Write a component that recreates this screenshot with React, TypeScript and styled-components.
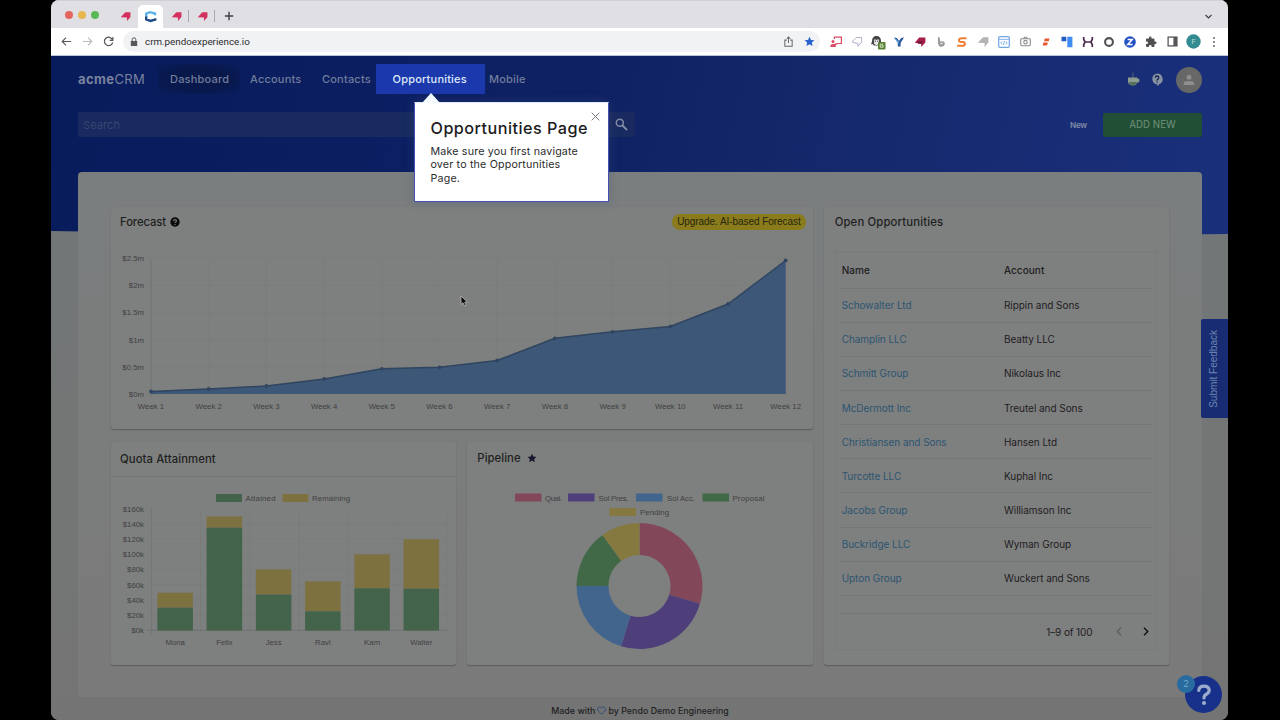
import React from "react";
import styled, { createGlobalStyle } from "styled-components";

const Global = createGlobalStyle`
  *{box-sizing:border-box}
  body{margin:0;background:#000;font-family:Inter,"Liberation Sans",sans-serif;overflow:hidden}
  svg{display:block;flex:none}
`;

const Desktop = styled.div`height:720px;width:1280px;background:#000;padding:0 52px 0 51px;`;
const BrowserWindow = styled.div`
  position:relative;height:720px;border-radius:8px;overflow:hidden;display:flex;flex-direction:column;background:#757676;
`;
const TabStrip = styled.div`
  height:28px;flex:none;background:#e0dfe4;display:flex;align-items:stretch;border-top:1px solid #d0cfd4;
`;
const Lights = styled.div`display:flex;align-items:center;gap:5px;padding-left:14px;width:61px;`;
const Light = styled.i<{ $c: string }>`width:8px;height:8px;border-radius:50%;background:${p => p.$c};`;
const Tab = styled.div<{ $active?: boolean; $w: number; $line?: boolean }>`
  width:${p => p.$w}px;display:flex;align-items:center;justify-content:center;padding-top:3px;
  ${p => p.$active && "background:#fff;margin-top:4px;padding-top:0;border-radius:5px 5px 0 0;"}
  ${p => p.$line && "background:linear-gradient(#aaa9ae,#aaa9ae) right 9px/1px 12px no-repeat;"}
`;
const Spacer = styled.div`flex:1;`;
const Toolbar = styled.div`
  height:28px;flex:none;background:#fff;border-bottom:1px solid #b9c5d8;display:flex;align-items:center;padding:0 3.5px 0 4.5px;
`;
const Cell = styled.div`width:21px;height:21px;display:flex;align-items:center;justify-content:center;`;
const Address = styled.div`
  margin:0 5.5px 0 4.5px;flex:1;height:21px;border-radius:11px;background:#f1f2f4;display:flex;align-items:center;
`;
const Url = styled.span`font:9.8px Roboto,sans-serif;color:#2b2c2e;margin-left:1px;`;

const Page = styled.div`
  position:relative;flex:1;min-height:0;overflow:hidden;padding:0 26px 0 27px;
  background:linear-gradient(180deg,#717677,#747676 60%,#747474);
  isolation:isolate;
  &::before{content:"";position:absolute;z-index:-1;left:0;right:0;top:0;height:184px;
    background:linear-gradient(103deg,#081b5b 0%,#0b1f62 30%,#0e2263 45%,#14286b 65%,#1a307c 100%);
    clip-path:polygon(0 0,100% 0,100% 178px,50% 184px,0 175px);}
`;
const Nav = styled.nav`display:flex;padding-top:8px;height:38px;`;
const Logo = styled.div`
  width:80px;line-height:30px;font-size:13px;color:#79839f;letter-spacing:.4px;white-space:nowrap;b{font-weight:700}
`;
const NavItem = styled.a<{ $w: number; $pad: number; $state?: "current" | "target" }>`
  width:${p => p.$w}px;padding-left:${p => p.$pad}px;height:30px;line-height:30px;font-size:11px;font-weight:500;
  letter-spacing:.2px;white-space:nowrap;color:#707c9b;
  ${p => p.$state === "current" && "background:radial-gradient(ellipse,#08184b 50%,transparent 100%);"}
  ${p => p.$state === "target" && "background:#1b39ac;color:#dfe9fb;"}
`;
const NavTools = styled.div`margin-left:auto;display:flex;align-items:center;gap:11px;height:31px;`;
const Avatar = styled.div`
  margin-left:2px;width:26px;height:26px;border-radius:50%;background:#666766;display:flex;align-items:center;justify-content:center;
`;
const Actions = styled.div`display:flex;align-items:center;margin-top:18px;height:25px;`;
const Search = styled.div`
  width:557px;height:25px;background:#182a5f;border-radius:2px;display:flex;align-items:center;justify-content:space-between;
  padding:0 7px 0 5px;font-size:11px;letter-spacing:.1px;color:#37466f;
`;
const NewLabel = styled.span`margin-left:auto;font-size:8.2px;font-weight:600;color:#7f8aa7;letter-spacing:-.25px;`;
const AddButton = styled.button`
  margin-left:16px;width:99px;height:24px;border:0;border-radius:2px;background:#214f35;color:#668770;
  font:500 9.7px Inter,sans-serif;letter-spacing:.05px;
`;
const Panel = styled.main`
  margin-top:35px;height:525px;border-radius:4px;background:linear-gradient(180deg,#7a7e7e,#7b7c7c 50%,#7a7a7a);
  padding:35px 33px 32px;display:grid;grid-template-columns:repeat(3,1fr);grid-template-rows:222px 223px;gap:13px 11px;
`;
const Card = styled.section<{ $area: string }>`
  grid-area:${p => p.$area};background:#7e7f7f;border-radius:3px;min-width:0;display:flex;flex-direction:column;
  box-shadow:0 1px 1px -.5px #5c5d5d,0 0 2px #797a7a;
`;
const CardHead = styled.header<{ $h?: number; $rule?: boolean; $left?: number; $top?: number }>`
  height:${p => p.$h ?? 31}px;flex:none;display:flex;align-items:center;padding:${p => p.$top ?? 0}px 7px 0 ${p => p.$left ?? 9}px;
  border-bottom:1px solid ${p => (p.$rule ? "#737474" : "transparent")};
`;
const CardTitle = styled.h2<{ $ls?: number }>`
  margin:0;font-size:11.3px;font-weight:500;color:#1e1f20;letter-spacing:${p => p.$ls ?? 0.15}px;
`;
const Upgrade = styled.span`
  margin-left:auto;background:#8a7c1c;color:#28250e;border-radius:8px;padding:0 5px;
  font:10px/16px "Liberation Sans",sans-serif;letter-spacing:-.06px;white-space:nowrap;
`;
const TitleIcon = styled.span<{ $gap: number }>`margin-left:${p => p.$gap}px;`;
const Chart = styled.svg`
  text{font-family:"Liberation Sans",sans-serif;font-size:7.8px;fill:#3f4142}
`;
const Table = styled.div`margin:13px 12px 0 11px;border:1px solid #797a7a;height:399px;display:flex;flex-direction:column;`;
const Row = styled.div<{ $head?: boolean }>`
  height:${p => (p.$head ? 36.5 : 34.17)}px;flex:none;display:grid;grid-template-columns:162.3px 1fr;align-items:center;
  margin:0 4px;padding-left:2px;border-bottom:1px solid #757676;
  font-size:10px;font-weight:${p => (p.$head ? 500 : 400)};color:#1f2021;letter-spacing:${p => (p.$head ? 0.05 : -0.05)}px;
`;
const Link = styled.a`color:#2c5672;`;
const Pager = styled.div`
  margin:17.5px 4px 0;height:37px;border-top:1px solid #757676;display:flex;align-items:center;justify-content:flex-end;
  font-size:10px;letter-spacing:-.1px;color:#202122;padding-right:2.5px;
`;
const PagerButton = styled.span<{ $ml: number }>`margin-left:${p => p.$ml}px;`;
const Footer = styled.footer`
  display:flex;justify-content:center;align-items:center;gap:2px;height:26px;font-size:8.8px;font-weight:500;
  letter-spacing:.05px;color:#202122;
`;
const Guide = styled.div`
  position:absolute;left:363px;top:102px;width:195px;height:100px;background:#fff;border:1px solid #4450b5;border-top-color:#dfe6f6;
  box-shadow:0 0 10px rgba(70,80,130,.35);padding:16px 0 0 15.5px;
  &::before{content:"";position:absolute;left:7px;top:-10px;border:9.5px solid transparent;border-top:0;border-bottom:10px solid #f4fbff}
`;
const GuideTitle = styled.h3`margin:0;font-size:16.2px;line-height:18px;font-weight:500;color:#1c1c1d;letter-spacing:.47px;white-space:nowrap;`;
const GuideText = styled.p`margin:7.5px 0 0;font-size:10.7px;line-height:13.7px;color:#2b2b2c;letter-spacing:.17px;white-space:nowrap;`;
const Close = styled.svg`position:absolute;right:8px;top:9px;`;
const Feedback = styled.div`
  position:absolute;right:0;top:319px;width:27px;height:99px;background:#172c72;border-radius:2px 0 0 2px;
  display:flex;align-items:center;justify-content:center;padding-right:2px;color:#6f87b0;
  font:10px "Liberation Sans",sans-serif;writing-mode:vertical-rl;
  span{transform:rotate(180deg)}
`;
const HelpButton = styled.div`
  position:absolute;left:1134px;top:676px;width:37px;height:37px;border-radius:50%;background:#17308a;
  display:flex;align-items:center;justify-content:center;
`;
const Badge = styled.span`
  position:absolute;left:-8px;top:-1px;width:18px;height:18px;border-radius:50%;background:#286b9e;color:#74a9cf;
  font-size:9px;line-height:18px;text-align:center;
`;
const Pointer = styled.svg`position:absolute;left:409px;top:295px;`;

const Pendo = ({ c = "#d5315f", s = 11 }: { c?: string; s?: number }) => (
  <svg width={s} height={s} viewBox="0 0 12 12"><path fill={c} d="M.8 6.800 5.500 1.700q.4-.4 1-.4h4.900V6.500L7.600 11V7z" /></svg>
);
const I = ({ children, s = 12 }: { children: React.ReactNode; s?: number }) => (
  <svg width={s} height={s} viewBox="0 0 12 12" fill="none" strokeWidth="1.2">{children}</svg>
);

const extensions: React.ReactNode[] = [
  <I><path stroke="#d94a66" d="M4.4 3V1.2h7v6.3H7" /><circle cx="3" cy="5.4" r="1.5" fill="#d94a66" /><path fill="#d94a66" d="M.4 11V9.6Q.4 8 3 8l4-.8.4 1L5.7 9.3V11z" /></I>,
  <I><path stroke="#aaa6c6" strokeWidth=".9" d="M1.200 5.900 5.200 1.500h5.500V6L7 10.300V7.300L4 7z" /></I>,
  <svg width="16" height="16" viewBox="0 0 16 16"><path fill="#444" d="M2 7.500Q2 2 6.500 2t4.500 5.500l1.500 3-2-.5-1 1.500H4L2.500 10 1 10.500z" /><path d="M4 6.500Q4.300 4.500 6.500 6q2.200-1.500 2.500.5v3Q8 11 6.500 11T4 9.500z" fill="#e8e8e8" /><circle cx="5.400" cy="7.200" r=".6" fill="#333" /><circle cx="7.700" cy="7.200" r=".6" fill="#333" /><rect x="8" y="8" width="7.500" height="7.500" rx="1" fill="#577f32" /><path d="M13.200 10.200h-3v3h3v-1.500h-1.500" stroke="#d5e4c5" fill="none" /></svg>,
  <I><path fill="#2b5c9b" d="M1 1.500 3.800 2 6 4.800 8.200 2l2.800-.5L7.600 7v3.500H4.800V7z" /><path fill="#73b6df" d="m1 1.500 5 4.300-.8 1.700z" /></I>,
  <I><path fill="#a51e46" d="M.8 6.800 5.200 1.500h6.200v5L7.200 11V8z" /><path fill="#5e1730" d="M4 5.500h4v2H4z" /></I>,
  <I><path fill="#9a9a9a" d="M3 .8l1.600.8.8 4.200L8 5l2 2-1 3-4 1-2-3z" /><path stroke="#fff" strokeWidth=".8" d="m5 8 3-1" /></I>,
  <I><path stroke="#ee7f32" strokeWidth="2" d="M10.500 2.200H5.700Q3.200 2.200 3 4.100T5.200 6H7q2.100 0 1.800 2T6.200 9.800h-5" /></I>,
  <Pendo c="#b4b4b4" s={12} />,
  <I><rect x=".7" y=".7" width="10.6" height="10.6" rx="1" stroke="#72a8e2" /><path stroke="#72a8e2" d="M1 3.3h10M4.2 5.4 2.8 7l1.4 1.6M7.8 5.4 9.2 7 7.8 8.6M6.5 5.2l-1 3.7" strokeWidth=".9" /></I>,
  <I s={11}><rect x=".8" y="3" width="10.4" height="7.6" rx="1" stroke="#8a8a8a" /><path d="M4 2.8 5 1.4h2l1 1.4" stroke="#8a8a8a" /><circle cx="6" cy="6.7" r="1.900" stroke="#8a8a8a" /></I>,
  <I><path fill="#e9582d" d="M5 2.500h4.500L8.700 5.300H4.200q0-2.800.8-2.800M3.400 6.600h4.400Q7.500 9.500 6.600 9.500H2.700z" /></I>,
  <I><path fill="#235bc4" d="M.5.8h4.800v4.5H.5z" /><path fill="#3f8cf2" d="M6.3.8h5.1v10.5H6.3z" /></I>,
  <I><path stroke="#4b2c49" strokeWidth="1.700" d="M1.700 1v2.500L3.200 6 1.700 8.500V11M10.300 1v2.500L8.800 6l1.500 2.500V11M3 6h6" /></I>,
  <I><circle cx="6" cy="6" r="3.900" stroke="#505153" strokeWidth="2.100" /></I>,
  <I><circle cx="6" cy="6" r="5.800" fill="#2351c6" /><path stroke="#fff" strokeWidth="1.500" d="M3.600 3.500h4.600L3.800 8.500h4.700" /></I>,
  <svg width="12" height="12" viewBox="0 0 24 24" fill="#4f5052"><path d="M20.5 11H19V7a2 2 0 0 0-2-2h-4V3.500a2.500 2.500 0 0 0-5 0V5H4a2 2 0 0 0-2 2v3.800h1.500a2.700 2.700 0 0 1 0 5.400H2V20a2 2 0 0 0 2 2h3.800v-1.500a2.700 2.700 0 0 1 5.400 0V22H17a2 2 0 0 0 2-2v-4h1.500a2.500 2.500 0 0 0 0-5" /></svg>,
  <I s={11}><rect x="1.200" y="1.200" width="9.600" height="9.600" stroke="#555659" strokeWidth="1.400" /><path fill="#555659" d="M7 1h4v10H7z" /></I>,
  <svg width="15" height="15" viewBox="0 0 15 15"><circle cx="7.500" cy="7.500" r="7.200" fill="#338b92" /><text x="7.500" y="10.300" fontSize="7.500" fill="#b9dddd" textAnchor="middle" fontFamily="Roboto">F</text></svg>,
  <I><circle cx="6" cy="2" r=".9" fill="#55585c" /><circle cx="6" cy="6" r=".9" fill="#55585c" /><circle cx="6" cy="10" r=".9" fill="#55585c" /></I>,
];

const Star = ({ c, s }: { c: string; s: number }) => (
  <svg width={s} height={s} viewBox="0 0 24 24"><path fill={c} d="m12 1.500 3.200 7 7.600.8-5.700 5.100 1.600 7.500L12 18.100l-6.700 3.800 1.600-7.500L1.200 9.300l7.600-.8z" /></svg>
);

/* Forecast chart, in card coordinates (origin 111,238) */
const weekY = [391.5, 389, 386, 379, 368.8, 367.3, 360.5, 338.3, 331.8, 326.5, 304, 260.5].map(v => v - 238);
const weekX = weekY.map((_, i) => 40 + i * 57.7);
const moneyTicks = ["$2.5m", "$2m", "$1.5m", "$1m", "$0.5m", "$0m"];

const Forecast = () => {
  const line = weekX.map((x, i) => `${x},${weekY[i]}`).join(" ");
  return (
    <Chart width="702" height="185" viewBox="0 0 702 185">
      {weekX.map((x, i) => <path key={x} stroke={i === 0 ? "#707272" : "#7b7c7c"} strokeWidth=".8" d={`M${x} 20V160`} />)}
      {moneyTicks.map((t, i) => <path key={t} stroke="#7b7c7c" strokeWidth=".8" d={`M36 ${20 + i * 27.2}H675`} />)}
      <polygon points={`40,156 ${line} 674.7,156`} fill="#3c5777" />
      <polyline points={line} fill="none" stroke="#30455f" strokeWidth="1.5" />
      {weekX.map((x, i) => <circle key={x} cx={x} cy={weekY[i]} r="1.9" fill="#30455f" />)}
      {moneyTicks.map((t, i) => <text key={t} x="33" y={23 + i * 27.2} textAnchor="end">{t}</text>)}
      {weekX.map((x, i) => <text key={x} x={x} y="170.700" textAnchor="middle">Week {i + 1}</text>)}
    </Chart>
  );
};

/* Quota chart, in card coordinates (origin 111,477) */
const quota: [string, number, number][] = [
  ["Mona", 592.7, 607.7], ["Felix", 516.5, 527.7], ["Jess", 569.5, 594.5],
  ["Ravi", 581.3, 611.3], ["Kam", 554.3, 588.3], ["Walter", 539.3, 588.7],
];
const Quota = () => (
  <Chart width="345" height="187" viewBox="0 0 345 187">
    {[0, 1, 2, 3, 4, 5, 6].map(i => <path key={i} stroke={i ? "#7a7b7b" : "#707171"} strokeWidth=".8" d={`M${40.5 + i * 49.2} 31.5V157`} />)}
    {[0, 1, 2, 3, 4, 5, 6, 7, 8].map(i => (
      <g key={i}>
        <path stroke={i === 8 ? "#6b6c6c" : "#7b7c7c"} strokeWidth=".8" d={`M36 ${31.5 + i * 15.22}H336`} />
        <text x="33" y={34.5 + i * 15.22} textAnchor="end">${160 - i * 20}k</text>
      </g>
    ))}
    {quota.map(([n, top, mid], i) => {
      const x = 46.4 + i * 49.23;
      return (
        <g key={n}>
          <rect x={x} y={top - 477} width="35.5" height={mid - top} fill="#7e7140" />
          <rect x={x} y={mid - 477} width="35.5" height={630.5 - mid} fill="#43644b" />
          <text x={x + 17.8} y="168" textAnchor="middle">{n}</text>
        </g>
      );
    })}
    <rect x="105" y="17" width="26" height="8" fill="#43644b" />
    <text x="134.5" y="23.8" textLength="30">Attained</text>
    <rect x="171.5" y="17" width="26" height="8" fill="#7e7140" />
    <text x="201" y="23.8" textLength="38">Remaining</text>
  </Chart>
);

/* Pipeline chart, in card coordinates (origin 467.5,473) */
const stages: [string, number, number, string][] = [
  ["red", 0, 106.4, "#82485a"], ["purple", 106.4, 197, "#4e3f7b"], ["blue", 197, 270, "#41658c"],
  ["green", 270, 324, "#416947"], ["yellow", 324, 360, "#857940"],
];
const arc = (a: number, b: number) => {
  const p = (r: number, d: number) => `${172.5 + r * Math.sin((d * Math.PI) / 180)} ${113 - r * Math.cos((d * Math.PI) / 180)}`;
  return `M${p(63, a)}A63 63 0 0 1 ${p(63, b)}L${p(31, b)}A31 31 0 0 0 ${p(31, a)}Z`;
};
const legend: [string, string, number, number, number, number][] = [
  ["Qual.", "#82485a", 48, 78, 17, 0], ["Sol Pres.", "#4e3f7b", 101, 131.5, 30, 0], ["Sol Acc.", "#41658c", 169, 200, 28, 0],
  ["Proposal", "#416947", 235.5, 265.5, 32, 0], ["Pending", "#857940", 142.5, 173, 29, 14.5],
];
const Pipeline = () => (
  <Chart width="345" height="191" viewBox="0 0 345 191">
    {stages.map(([n, a, b, c]) => <path key={n} d={arc(a, b)} fill={c} />)}
    {legend.map(([t, c, x, tx, w, dy]) => (
      <g key={t}><rect x={x} y={20.5 + dy} width="26.5" height="8" fill={c} /><text x={tx} y={27.5 + dy} textLength={w}>{t}</text></g>
    ))}
  </Chart>
);

const rows = [
  ["Schowalter Ltd", "Rippin and Sons"], ["Champlin LLC", "Beatty LLC"], ["Schmitt Group", "Nikolaus Inc"],
  ["McDermott Inc", "Treutel and Sons"], ["Christiansen and Sons", "Hansen Ltd"], ["Turcotte LLC", "Kuphal Inc"],
  ["Jacobs Group", "Williamson Inc"], ["Buckridge LLC", "Wyman Group"], ["Upton Group", "Wuckert and Sons"],
];

export default function App() {
  return (
    <Desktop>
      <Global />
      <BrowserWindow>
        <TabStrip>
          <Lights><Light $c="#e3655d" /><Light $c="#e6b84f" /><Light $c="#5ab955" /></Lights>
          <Tab $w={26}><Pendo /></Tab>
          <Tab $w={25} $active>
            <svg width="13" height="13" viewBox="0 0 13 13" fill="none" strokeWidth="2.4"><path stroke="#59b3e6" d="M2.200 7V3.600L6 2.200l5 1.300v1.700" /><path stroke="#1d4c86" d="M2.200 6.500v3L6.500 11l4.700-1.500V8.200" /></svg>
          </Tab>
          <Tab $w={26} $line><Pendo /></Tab>
          <Tab $w={26} $line><Pendo /></Tab>
          <Tab $w={27}><I s={10}><path stroke="#404144" strokeWidth="1.7" d="M6 1v10M1 6h10" /></I></Tab>
          <Spacer />
          <Tab $w={40}><I s={9}><path stroke="#404144" strokeWidth="1.6" d="m2 4 4 4 4-4" /></I></Tab>
        </TabStrip>
        <Toolbar>
          <Cell><I s={11}><path stroke="#56585c" d="M11 6H1.500M5.500 1.800 1.300 6 5.500 10.200" /></I></Cell>
          <Cell><I s={11}><path stroke="#b8babd" d="M1 6h9.500M6.500 1.800 10.700 6 6.500 10.200" /></I></Cell>
          <Cell><I s={11}><path stroke="#56585c" strokeWidth="1.3" d="M10.300 4A4.600 4.600 0 1 0 10.600 7M10.800 1v3.700H7.200" /></I></Cell>
          <Address>
            <Cell><svg width="8" height="10" viewBox="0 0 8 10"><path fill="#56585c" d="M.8 4h6.400v5H.8z" /><path fill="none" stroke="#56585c" d="M2.200 4V2.600a1.800 1.800 0 0 1 3.600 0V4" /></svg></Cell>
            <Url>crm.pendoexperience.io</Url>
            <Spacer />
            <Cell><I s={11}><path stroke="#66686b" strokeWidth="1.1" d="M4 4.500H2v6.700h8V4.500H8M6 7.500V1M4 3l2-2 2 2" /></I></Cell>
            <Cell><Star c="#2761cf" s={11} /></Cell>
          </Address>
          {extensions.map((e, i) => <Cell key={i}>{e}</Cell>)}
        </Toolbar>
        <Page>
          <Nav>
            <Logo><b>acme</b>CRM</Logo>
            <NavItem $w={82} $pad={12} $state="current">Dashboard</NavItem>
            <NavItem $w={71} $pad={10}>Accounts</NavItem>
            <NavItem $w={65} $pad={11}>Contacts</NavItem>
            <NavItem $w={109} $pad={16.5} $state="target">Opportunities</NavItem>
            <NavItem $w={55} $pad={4}>Mobile</NavItem>
            <NavTools>
              <svg width="13" height="16" viewBox="0 0 13 16"><path stroke="#596c73" d="M6 .5V6" /><path fill="#8b9b8d" d="M1 5.500h9.500v1.300h1.800v3.400h-1.800q-1 3-4.700 3.200Q1 13.200 1 9.500z" /><path fill="#566f5b" d="M1.600 10h8.300q-1 3.400-4.100 3.400T1.600 10" /></svg>
              <svg width="12" height="14" viewBox="0 0 12 14"><path fill="#8792a3" d="M6 .5a5.600 5.600 0 0 1 2.500 10.600L6.500 13.500V11.600A5.600 5.600 0 0 1 6 .5" /><path fill="none" stroke="#152454" strokeWidth="1.3" d="M4.200 4.600Q4.300 3 6 3t1.800 1.500Q7.800 5.500 6 7v.7M6 8.500v1.200" /></svg>
              <Avatar><svg width="12" height="12" viewBox="0 0 12 12" fill="#8d8e8e"><circle cx="6" cy="3.3" r="2.500" /><path d="M.8 11V9.400Q1 7 6 7t5.200 2.400V11z" /></svg></Avatar>
            </NavTools>
          </Nav>
          <Actions>
            <Search>Search<svg width="13" height="13" viewBox="0 0 13 13" fill="none" stroke="#828ba5" strokeWidth="1.5"><circle cx="4.800" cy="4.800" r="3.500" /><path d="m7.500 7.500 4.500 4.500" strokeWidth="1.800" /></svg></Search>
            <NewLabel>New</NewLabel>
            <AddButton>ADD NEW</AddButton>
          </Actions>
          <Panel>
            <Card $area="1 / 1 / 2 / 3">
              <CardHead>
                <CardTitle $ls={-0.1}>Forecast</CardTitle>
                <TitleIcon $gap={4}><svg width="10" height="10" viewBox="0 0 10 10"><circle cx="5" cy="5" r="4.700" fill="#0b0b0c" /><path stroke="#777" fill="none" strokeWidth="1.200" d="M3.500 4Q3.500 2.600 5 2.600T6.500 4Q6.500 4.700 5 5.500v.6M5 6.900V8" /></svg></TitleIcon>
                <Upgrade>Upgrade. AI-based Forecast</Upgrade>
              </CardHead>
              <Forecast />
            </Card>
            <Card $area="1 / 3 / 3 / 4">
              <CardHead $left={11}><CardTitle>Open Opportunities</CardTitle></CardHead>
              <Table>
                <Row $head><span>Name</span><span>Account</span></Row>
                {rows.map(([n, a]) => <Row key={n}><Link>{n}</Link><span>{a}</span></Row>)}
                <Pager>
                  1–9 of 100
                  <PagerButton $ml={22}><I s={9}><path stroke="#5c5d5d" strokeWidth="1.6" d="M8 1 3 6l5 5" /></I></PagerButton>
                  <PagerButton $ml={17}><I s={9}><path stroke="#111" strokeWidth="1.9" d="m4 1 5 5-5 5" /></I></PagerButton>
                </Pager>
              </Table>
            </Card>
            <Card $area="2 / 1 / 3 / 2">
              <CardHead $h={35} $rule><CardTitle $ls={0.1}>Quota Attainment</CardTitle></CardHead>
              <Quota />
            </Card>
            <Card $area="2 / 2 / 3 / 3">
              <CardHead $left={10} $top={2}><CardTitle $ls={0.05}>Pipeline</CardTitle><TitleIcon $gap={6}><Star c="#17182f" s={10} /></TitleIcon></CardHead>
              <Pipeline />
            </Card>
          </Panel>
          <Footer>Made with <svg width="9" height="9" viewBox="0 0 12 12"><path fill="none" stroke="#314a76" strokeWidth="1.3" d="M6 10.700C2 7.700.8 6 .8 4 .8 1.300 4.200.2 6 3c1.800-2.800 5.200-1.700 5.200 1 0 2-1.200 3.700-5.200 6.700z" /></svg> by Pendo Demo Engineering</Footer>
        </Page>
        <Guide>
          <GuideTitle>Opportunities Page</GuideTitle>
          <GuideText>Make sure you first navigate<br />over to the Opportunities<br />Page.</GuideText>
          <Close width="9" height="9" viewBox="0 0 9 9"><path stroke="#777b80" d="m.7.7 7.600 7.600m0-7.600L.7 8.300" /></Close>
        </Guide>
        <Feedback><span>Submit Feedback</span></Feedback>
        <HelpButton>
          <svg width="18" height="24" viewBox="0 0 18 24"><path fill="none" stroke="#9aabcb" strokeWidth="3.2" strokeLinecap="round" d="M3.800 7.500Q4 3.200 9 3.200t5.200 4.200Q14 10 11 11.500 9 12.500 9 15" /><circle cx="9" cy="20" r="2.100" fill="#9aabcb" /></svg>
          <Badge>2</Badge>
        </HelpButton>
        <Pointer width="8" height="12" viewBox="0 0 8 12"><path fill="#080808" stroke="#b9b9b9" strokeWidth=".8" d="M1 1v8.500l2-1.800L4.500 11 6 10.300 4.700 7.200l2.600-.1z" /></Pointer>
      </BrowserWindow>
    </Desktop>
  );
}
